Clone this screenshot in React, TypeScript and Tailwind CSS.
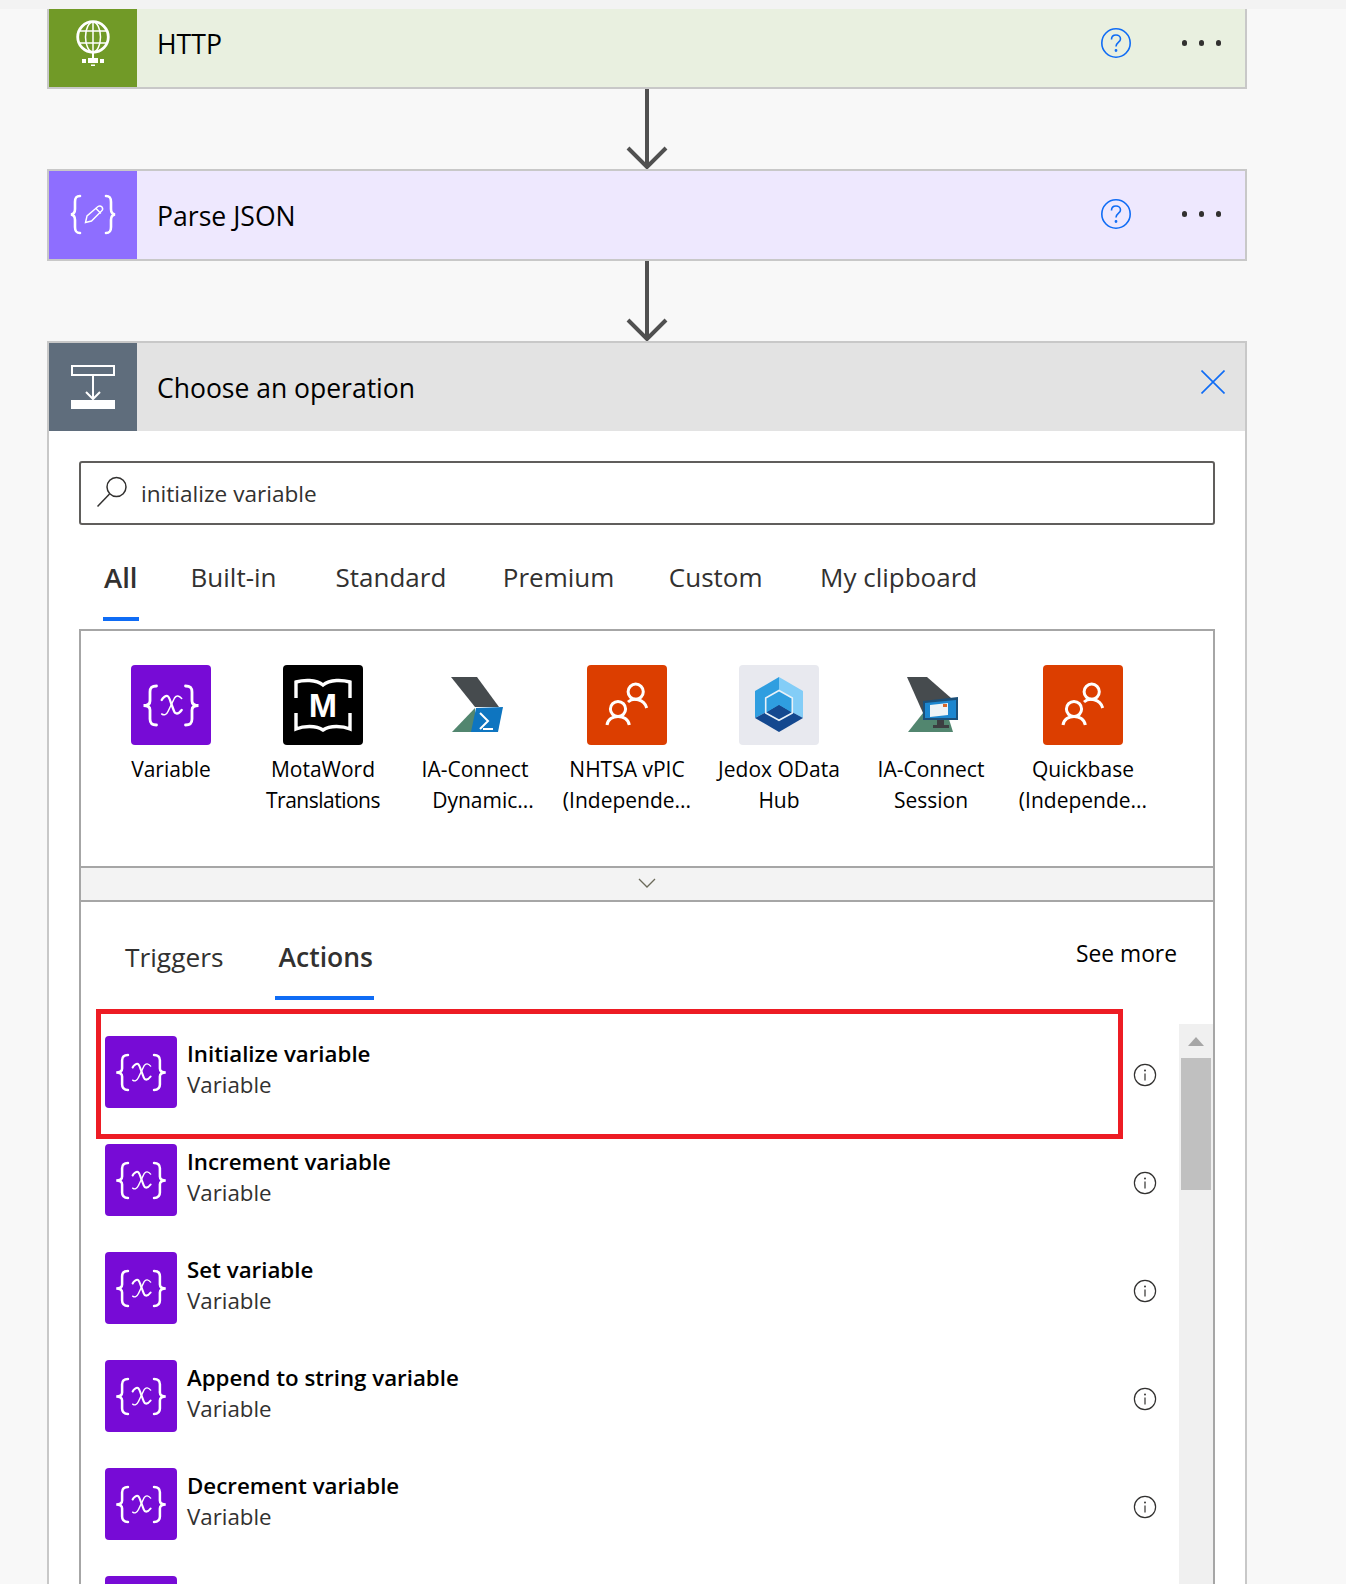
import { Fragment } from 'react';

const BLUE = '#0f6cf5';

function VarGlyph({ className }: { className: string }) {
    return (
        <svg viewBox="0 0 80 80" className={className} fill="none" stroke="#fff" strokeWidth="2.800" strokeLinecap="round">
            <path d="M25.500 21C20.500 21 19 23 19 27V36C19 39 17.500 40.500 12.500 40.500C17.500 40.500 19 42 19 45V54C19 58 20.500 60 25.500 60" />
            <path d="M54.500 21C59.500 21 61 23 61 27V36C61 39 62.500 40.500 67.500 40.500C62.500 40.500 61 42 61 45V54C61 58 59.500 60 54.500 60" />
            <path d="M30.700 35C32 32 35 30.500 36.500 31C38 31.500 39 35 40 38L43 46C44 49 47 50 50.700 45" strokeWidth="2.300" />
            <path d="M50.700 33.500C48 30.500 45.500 30 43.500 33L37 46.500C35.500 50 33 50.500 30.700 49" strokeWidth="1.500" />
        </svg>
    );
}

function VarTile({ size }: { size: 'lg' | 'sm' }) {
    return (
        <div className={size === 'lg' ? 'w-20 h-20 rounded bg-[#770bd6] shrink-0' : 'w-[72px] h-[72px] rounded bg-[#770bd6] shrink-0'}>
            <VarGlyph className="w-full h-full" />
        </div>
    );
}

function MotaTile() {
    return (
        <div className="relative w-20 h-20 rounded bg-black flex items-center justify-center">
            <svg viewBox="0 0 80 80" className="absolute inset-0 w-20 h-20" fill="none" stroke="#fff" strokeWidth="3.400">
                <path d="M13 33V17C20 15 33 14 40 20C47 14 60 15 67 17V33" />
                <path d="M13 48V64C20 61 33 60 40 65C47 60 60 61 67 64V48" />
            </svg>
            <span className="relative text-white text-[34px] font-bold leading-none font-['Liberation_Sans',sans-serif]">M</span>
        </div>
    );
}

function IaConnectTile() {
    return (
        <svg viewBox="0 0 80 80" className="w-20 h-20">
            <path d="M16 12H42L64 42H40Z" fill="#464b4e" />
            <path d="M40 43L17 67H40Z" fill="#52866f" />
            <path d="M41 43L68 42L63 67H36Z" fill="#0e75c0" />
            <path d="M45 48L53 56L45 64M48 64H58" fill="none" stroke="#fff" strokeWidth="2" />
        </svg>
    );
}

function SessionTile() {
    return (
        <svg viewBox="0 0 80 80" className="w-20 h-20">
            <path d="M16 12H36L60 33L32 48Z" fill="#464b4e" />
            <path d="M32 48L17 67H62L56 48Z" fill="#52866f" />
            <path d="M32 36L67 32V55H32Z" fill="#1b4f78" />
            <path d="M34 38L65 35V53H34Z" fill="#1c86cf" />
            <path d="M39 40L57 38V50L39 52Z" fill="#eef3f6" />
            <path d="M52 39H56V42H52Z" fill="#d9682b" />
            <path d="M46 55H53V60H58V63H42V60H46Z" fill="#3c3f41" />
        </svg>
    );
}

function PeopleTile() {
    return (
        <div className="w-20 h-20 rounded bg-[#dc3e00]">
            <svg viewBox="0 0 80 80" className="w-20 h-20" fill="none" stroke="#fff" strokeWidth="3">
                <circle cx="48.700" cy="26.700" r="7.600" />
                <path d="M41 37C46 32.500 57 33.500 59.700 43" />
                <circle cx="31" cy="44" r="7.600" />
                <path d="M20 60C21.500 48.500 40.500 48.500 42.300 60" />
            </svg>
        </div>
    );
}

function JedoxTile() {
    return (
        <div className="w-20 h-20 rounded bg-[#e8e9ef]">
            <svg viewBox="0 0 80 80" className="w-20 h-20">
                <path d="M40 12L16 26V53L40 40Z" fill="#2f9ee0" />
                <path d="M40 12L64 26V53L40 40Z" fill="#83cdf7" />
                <path d="M40 40L16 53L40 67L64 53Z" fill="#14488f" />
                <path d="M40 25.500L53.300 33V48L40 40L26.700 48V33Z" fill="#2f9ee0" />
                <path d="M40 40L26.700 48L40 55.300L53.300 48Z" fill="#14488f" />
                <path d="M40 25.500L53.300 33V48L40 55.300L26.700 48V33Z" fill="none" stroke="#e8f1f8" strokeWidth="1.600" />
            </svg>
        </div>
    );
}

function HelpIcon() {
    return (
        <svg viewBox="0 0 32 32" className="w-8 h-8" fill="none" stroke={BLUE} strokeWidth="1.600">
            <circle cx="16" cy="16" r="14.200" />
            <path d="M11.500 12.500C11.500 9.500 13.500 8 16 8C18.500 8 20.500 9.600 20.500 12C20.500 15.500 16 15.500 16 19.500" />
            <circle cx="16" cy="23.500" r="0.600" fill={BLUE} />
        </svg>
    );
}

function Dots() {
    return (
        <div className="flex gap-[11.300px]">
            <span className="w-[5.500px] h-[5.500px] rounded-full bg-[#323130]" />
            <span className="w-[5.500px] h-[5.500px] rounded-full bg-[#323130]" />
            <span className="w-[5.500px] h-[5.500px] rounded-full bg-[#323130]" />
        </div>
    );
}

function Arrow() {
    return (
        <div className="h-20 flex justify-center">
            <svg width="44" height="80" viewBox="0 0 44 80" fill="none" stroke="#505050" strokeWidth="4">
                <path d="M22 0V78" />
                <path d="M3 59L22 78L41 59" />
            </svg>
        </div>
    );
}

function InfoIcon() {
    return (
        <svg viewBox="0 0 24 24" className="w-6 h-6" fill="none" stroke="#323130" strokeWidth="1.200">
            <circle cx="12" cy="12" r="10.600" />
            <path d="M12 10.500V17.500" />
            <circle cx="12" cy="7.500" r="0.400" fill="#323130" />
        </svg>
    );
}

const connectors = [
    { lines: ['Variable'], icon: <VarTile size="lg" /> },
    { lines: ['MotaWord', 'Translations'], icon: <MotaTile /> },
    { lines: ['IA-Connect', 'Dynamic...'], icon: <IaConnectTile /> },
    { lines: ['NHTSA vPIC', '(Independe...'], icon: <PeopleTile /> },
    { lines: ['Jedox OData', 'Hub'], icon: <JedoxTile /> },
    { lines: ['IA-Connect', 'Session'], icon: <SessionTile /> },
    { lines: ['Quickbase', '(Independe...'], icon: <PeopleTile /> },
];

const actions = ['Initialize variable', 'Increment variable', 'Set variable', 'Append to string variable', 'Decrement variable', ''];

const tabs = [
    { label: 'Built-in', className: 'pt-[39px] mr-[59px]' },
    { label: 'Standard', className: 'pt-[39px] mr-[56.500px]' },
    { label: 'Premium', className: 'pt-[39px] mr-[54.500px]' },
    { label: 'Custom', className: 'pt-[39px] mr-[57.500px]' },
    { label: 'My clipboard', className: 'pt-[39px]' },
];

export default function App() {
    return (
        <div className="h-[1584px] overflow-hidden bg-[#f8f8f8] font-['Open_Sans',sans-serif] text-black">
            <div className="h-[9px] bg-[#f3f3f3]" />
            <div className="ml-[47px] w-[1200px]">
                {/* HTTP */}
                <div className="h-20 flex border-x-2 border-b-2 border-[#c8c8c8] bg-[#e9f0e0]">
                    <div className="w-[88px] bg-[#719a27] flex justify-center pt-[11px]">
                        <svg width="36" height="46" viewBox="0 0 36 46" fill="none" stroke="#fff" strokeWidth="1.500">
                            <circle cx="18" cy="17" r="15.300" strokeWidth="2.800" />
                            <ellipse cx="18" cy="17" rx="7.500" ry="15" />
                            <path d="M18 2V32M4 11H32M4 23H32" />
                            <path d="M18 33V38" strokeWidth="2" />
                            <path d="M7 39H11V43H7ZM13 38H23V43H13ZM25 39H29V43H25ZM16 44.500H20V46H16Z" fill="#fff" stroke="none" />
                        </svg>
                    </div>
                    <div className="flex-1 flex items-center justify-between pl-5 pb-[7px]">
                        <span className="text-[26.600px] leading-none">HTTP</span>
                        <div className="flex items-center gap-[50px] pr-[24px] pb-[3px]">
                            <HelpIcon />
                            <Dots />
                        </div>
                    </div>
                </div>
                <Arrow />
                {/* Parse JSON */}
                <div className="h-[92px] flex border-2 border-[#c8c8c8] bg-[#eee8fe]">
                    <div className="w-[88px] bg-[#8e6eff]">
                        <svg viewBox="0 0 88 88" className="w-[88px] h-[88px]" fill="none" stroke="#fff" strokeWidth="2.600" strokeLinecap="round">
                            <path d="M31 25C27 25 26 27 26 31V38C26 41.500 25 43 22 43.500C25 44 26 45.500 26 49V56C26 60 27 62 31 62" />
                            <path d="M57 25C61 25 62 27 62 31V38C62 41.500 63 43 66 43.500C63 44 62 45.500 62 49V56C62 60 61 62 57 62" />
                            <path d="M36.500 51.500L38 45L49 35.500C50.500 34.500 52 35 53 36C54 37.500 53.800 39 52.500 40L42.500 50Z" strokeWidth="1.400" />
                            <path d="M47 37.500L51.500 42" strokeWidth="1.400" />
                        </svg>
                    </div>
                    <div className="flex-1 flex items-center justify-between pl-5">
                        <span className="mt-[2px] text-[26.600px] leading-none">Parse JSON</span>
                        <div className="flex items-center gap-[50px] pr-[24px] pb-[2px]">
                            <HelpIcon />
                            <Dots />
                        </div>
                    </div>
                </div>
                <Arrow />
                {/* Choose an operation */}
                <div className="border-x-2 border-t-2 border-[#c8c8c8] bg-white">
                    <div className="h-[88px] flex bg-[#e3e3e3]">
                        <div className="w-[88px] bg-[#5f6d7c]">
                            <svg viewBox="0 0 88 88" className="w-[88px] h-[88px]" fill="none" stroke="#fff" strokeWidth="2">
                                <path d="M23 23H65V32H23Z" />
                                <path d="M44 33V56M37 49L44 56L51 49" />
                                <path d="M22 57H66V66H22Z" fill="#fff" stroke="none" />
                            </svg>
                        </div>
                        <div className="flex-1 flex items-center justify-between pl-5 pr-[20px]">
                            <span className="mt-[2px] text-[26.500px] leading-none">Choose an operation</span>
                            <svg width="24" height="24" viewBox="0 0 24 24" fill="none" stroke={BLUE} strokeWidth="1.600" className="mb-[10px]">
                                <path d="M0.500 0.500L23.500 23.500M23.500 0.500L0.500 23.500" />
                            </svg>
                        </div>
                    </div>
                    <div className="px-[30px] pt-[30px]">
                        {/* search */}
                        <div className="h-16 flex items-center border-2 border-[#605e5c] rounded-[3px] pl-[15px]">
                            <svg width="32" height="32" viewBox="0 0 32 32" fill="none" stroke="#323130" strokeWidth="1.500" className="mb-[2px]">
                                <circle cx="20.500" cy="11" r="9.500" />
                                <path d="M13.500 18L1.500 30.500" />
                            </svg>
                            <span className="ml-[13px] pt-[2px] text-[#323130] text-[22.600px] leading-none">initialize variable</span>
                        </div>
                        {/* category tabs */}
                        <div className="h-[104px] flex pl-6">
                            <div className="relative pt-[39px] mr-[52px]">
                                <span className="px-[1px] text-[27.500px] leading-none font-semibold text-[#323130]">All</span>
                                <span className="absolute left-0 right-0 top-[92px] h-1 bg-[#0f6cf5]" />
                            </div>
                            {tabs.map((t) => (
                                <div key={t.label} className={t.className}>
                                    <span className="text-[26px] leading-none text-[#323130]">{t.label}</span>
                                </div>
                            ))}
                        </div>
                        {/* connectors + list */}
                        <div className="border-x-2 border-t-2 border-[#a6a6a6]">
                            <div className="h-[235px] flex pl-[14px] pt-[34px]">
                                {connectors.map((c, i) => (
                                    <div key={i} className="w-[152px] flex flex-col items-center">
                                        {c.icon}
                                        <div className="mt-[9px] text-[21px] leading-[30.500px] text-center whitespace-nowrap">
                                            {c.lines.map((l) => (
                                                <Fragment key={l}>
                                                    <span className={l === 'Dynamic...' ? 'ml-[16px]' : l === 'Translations' ? 'tracking-[-0.500px]' : ''}>{l}</span>
                                                    <br />
                                                </Fragment>
                                            ))}
                                        </div>
                                    </div>
                                ))}
                            </div>
                            <div className="h-9 border-y-2 border-[#a6a6a6] bg-[#f3f3f3] flex justify-center items-center pb-[3px]">
                                <svg width="18" height="10" viewBox="0 0 18 10" fill="none" stroke="#6b6a5a" strokeWidth="1.300">
                                    <path d="M1 1L9 9L17 1" />
                                </svg>
                            </div>
                            <div className="h-[122px] flex justify-between pl-11 pr-9">
                                <div className="flex gap-[55px]">
                                    <div className="pt-[42px] text-[26.300px] leading-none text-[#323130]">Triggers</div>
                                    <div className="relative pt-[42px] text-[26.500px] leading-none font-semibold text-[#323130]">
                                        Actions
                                        <span className="absolute -left-[3px] -right-[1px] top-[94px] h-1 bg-[#0f6cf5]" />
                                    </div>
                                </div>
                                <div className="pt-[41px] text-[22.800px] leading-none">See more</div>
                            </div>
                            <div className="relative flex">
                                <div className="flex-1 pt-3 pl-6">
                                    {actions.map((a) => (
                                        <div key={a} className="h-[108px] flex items-start">
                                            <VarTile size="sm" />
                                            {a && (
                                                <div className="ml-[10px]">
                                                    <div className="mt-[2px] text-[22.300px] leading-[32px] font-semibold">{a}</div>
                                                    <div className="-mt-px text-[22.300px] leading-[31px] text-[#323130]">Variable</div>
                                                </div>
                                            )}
                                            <div className="ml-auto mr-[22px] mt-[27px]">
                                                <InfoIcon />
                                            </div>
                                        </div>
                                    ))}
                                </div>
                                <div className="w-[34px] bg-[#f0f0f0] px-[2px] pt-[13px]">
                                    <div className="mx-auto w-0 h-0 border-x-[8px] border-x-transparent border-b-[9px] border-b-[#a6a6a6]" />
                                    <div className="mt-[12px] h-[132px] bg-[#c0c0c0]" />
                                </div>
                                <div className="absolute left-[15px] -top-[15px] w-[1027px] h-[130px] border-[5px] border-[#ed1c24]" />
                            </div>
                        </div>
                    </div>
                </div>
            </div>
        </div>
    );
}
